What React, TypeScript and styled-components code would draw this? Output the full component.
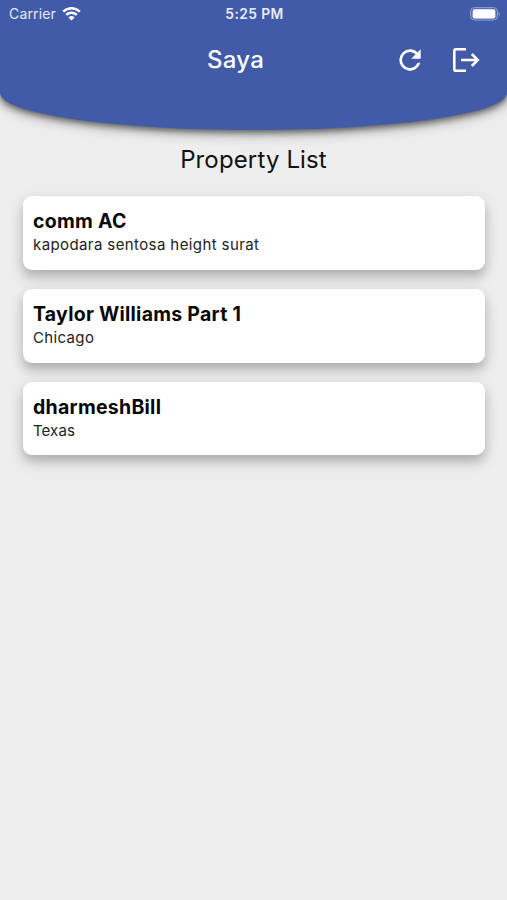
import React from 'react';
import styled, { createGlobalStyle } from 'styled-components';

const GlobalStyle = createGlobalStyle`
  * { box-sizing: border-box; }
  body {
    margin: 0;
    background: #eeeeee;
    font-family: Inter, "Liberation Sans", sans-serif;
  }
`;

const Screen = styled.main`
  min-height: 900px;
  background: #eeeeee;
  overflow: hidden;
`;

const Header = styled.header`
  height: 130.4px;
  background: #425ba9;
  color: #fff;
  border-radius: 0 0 50% 50% / 0 0 37px 37px;
  box-shadow: 0 2px 7px rgba(0, 0, 0, 0.55), 0 4px 13px rgba(0, 0, 0, 0.3);
`;

const StatusBar = styled.div`
  display: grid;
  grid-template-columns: 1fr auto 1fr;
  align-items: center;
  height: 27px;
  padding: 0 7px 0 9px;
`;

const Carrier = styled.div`
  display: flex;
  align-items: center;
  gap: 6px;
  font-size: 14px;
  letter-spacing: 0.15px;
  color: #e6eaf6;
`;

const Clock = styled.div`
  font-size: 13.8px;
  font-weight: 600;
  letter-spacing: 0.4px;
  color: #e9edf8;
`;

const BatteryIcon = styled.svg`
  justify-self: end;
`;

const Toolbar = styled.div`
  display: flex;
  justify-content: space-between;
  align-items: center;
  height: 66px;
  padding: 0 27px 0 207px;
`;

const Title = styled.h1`
  margin: 0;
  font-size: 24px;
  line-height: 30px;
  font-weight: 500;
  letter-spacing: 0.3px;
`;

const Actions = styled.div`
  display: flex;
  align-items: center;
  gap: 26px;
`;

const IconButton = styled.button`
  display: flex;
  padding: 0;
  border: 0;
  background: none;
  color: #fff;
`;

const Heading = styled.h2`
  margin: 14px 0 0;
  text-align: center;
  font-size: 24px;
  line-height: 32px;
  font-weight: 400;
  letter-spacing: 0.14px;
  color: #111;
`;

const List = styled.section`
  display: flex;
  flex-direction: column;
  gap: 19.4px;
  padding: 20px 22px 0 23px;
`;

const Card = styled.article`
  height: 73.4px;
  padding: 12.8px 10px;
  border-radius: 9px;
  background: #fff;
  box-shadow: 0 6px 8px -1px rgba(0, 0, 0, 0.13), 0 8px 14px 1px rgba(0, 0, 0, 0.12),
    0 3px 16px 2px rgba(0, 0, 0, 0.05);
`;

const Name = styled.h3`
  margin: 0;
  font-size: 19.5px;
  line-height: 25px;
  font-weight: 700;
  letter-spacing: 0.26px;
  color: #080808;
`;

const Address = styled.p<{ $tracking: number }>`
  margin: 0;
  font-size: 15px;
  line-height: 22px;
  letter-spacing: ${({ $tracking }) => $tracking}px;
  color: #222;
`;

const properties = [
  { name: 'comm AC', address: 'kapodara sentosa height surat', tracking: 0.4 },
  { name: 'Taylor Williams Part 1', address: 'Chicago', tracking: 0.35 },
  { name: 'dharmeshBill', address: 'Texas', tracking: 0.1 },
];

export default function App() {
  return (
    <Screen>
      <GlobalStyle />
      <Header>
        <StatusBar>
          <Carrier>
            Carrier
            <svg width="19" height="14" viewBox="0 0 19 14" fill="none" stroke="#fff" strokeWidth="2.5">
              <path d="M1.2 4.6a11.8 11.8 0 0 1 16.6 0" />
              <path d="M4.3 7.8a7.4 7.4 0 0 1 10.4 0" />
              <path d="M9.5 13.4 6.5 10.4a4.3 4.3 0 0 1 6 0Z" fill="#fff" stroke="none" />
            </svg>
          </Carrier>
          <Clock>5:25 PM</Clock>
          <BatteryIcon width="30" height="14" viewBox="0 0 30 14">
            <rect x=".5" y=".5" width="27" height="12.6" rx="4" fill="#5a70b5" stroke="#899acb" />
            <rect x="2.7" y="2.2" width="22.6" height="9.2" rx="2" fill="#fff" />
            <path d="M28.7 5c1.6.6 1.6 3.4 0 4Z" fill="#899acb" />
          </BatteryIcon>
        </StatusBar>
        <Toolbar>
          <Title>Saya</Title>
          <Actions>
            <IconButton aria-label="Refresh">
              <svg width="32" height="32" viewBox="0 0 24 24" fill="currentColor">
                <path d="M17.65 6.35A7.958 7.958 0 0 0 12 4a8 8 0 1 0 7.73 10h-2.08A6 6 0 1 1 12 6c1.66 0 3.14.69 4.22 1.78L13 11h7V4l-2.35 2.35Z" />
              </svg>
            </IconButton>
            <IconButton aria-label="Log out">
              <svg width="28" height="26" viewBox="0 0 28 26" fill="none" stroke="currentColor" strokeWidth="2.6">
                <path d="M14 2.2H3.8a1.5 1.5 0 0 0-1.5 1.5v18.6a1.5 1.5 0 0 0 1.5 1.5H14" />
                <path d="M9 13H25.5M19.8 7l6 6-6 6" />
              </svg>
            </IconButton>
          </Actions>
        </Toolbar>
      </Header>
      <Heading>Property List</Heading>
      <List>
        {properties.map((p) => (
          <Card key={p.name}>
            <Name>{p.name}</Name>
            <Address $tracking={p.tracking}>{p.address}</Address>
          </Card>
        ))}
      </List>
    </Screen>
  );
}
